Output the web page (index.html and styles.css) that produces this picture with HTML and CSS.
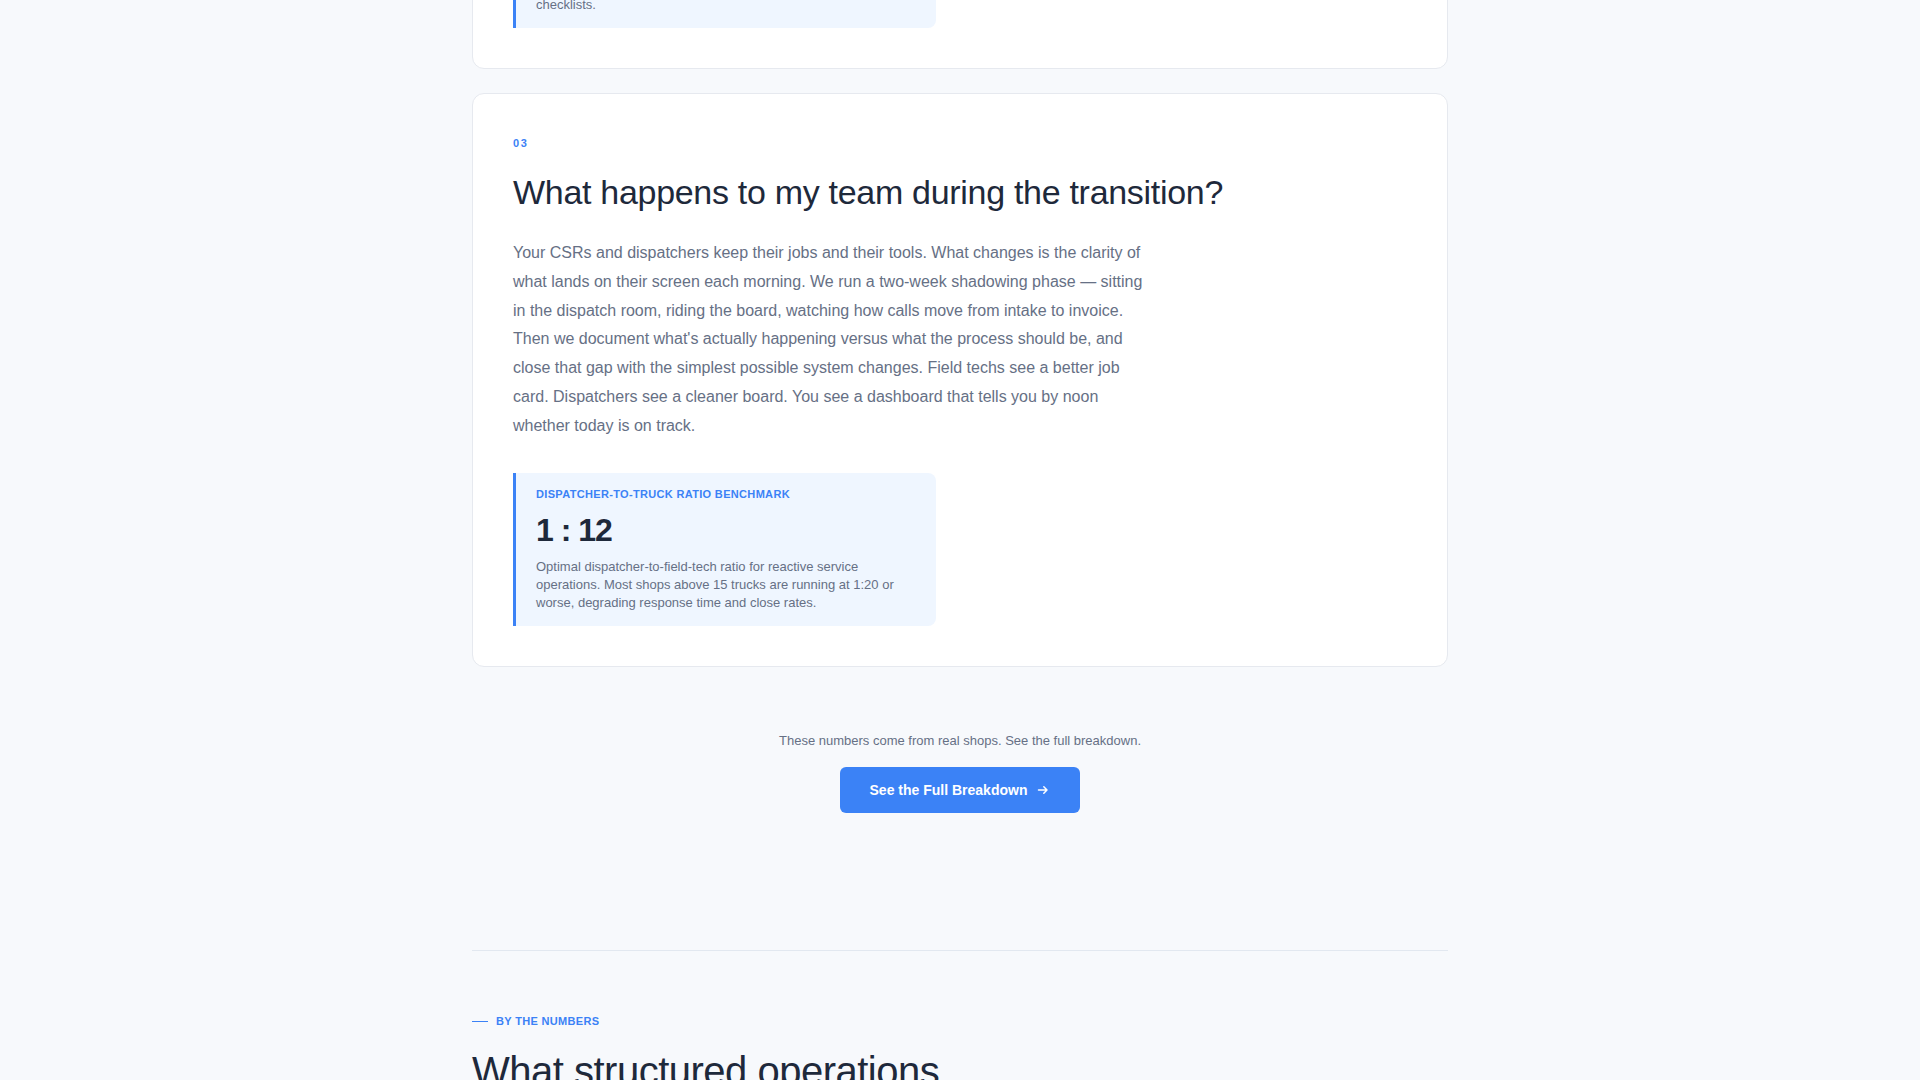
FILE: index.html
```html
<!DOCTYPE html>
<html lang="en">
<head>
<meta charset="utf-8">
<title>FAQ — Dispatch Operations</title>
<link rel="stylesheet" href="styles.css">
</head>
<body>
<main class="container">
  <section class="faq-list">
    <article class="faq-card">
      <div class="faq-num">02</div>
      <h2 class="faq-q">How fast will we see results?</h2>
      <p class="faq-a">Most shops see the first measurable change inside the first month. Callbacks drop, tickets close on the first visit more often, and the board stops carrying yesterday's leftovers into today. We track the numbers weekly so you can see the trend instead of guessing at it.</p>
      <div class="stat">
        <div class="stat-label">Average time to first result</div>
        <div class="stat-value">30 days</div>
        <p class="stat-desc">Median time to a measurable lift in first-time fix rate, driven by cleaner job cards, tighter intake scripts and standard dispatch checklists.</p>
      </div>
    </article>

    <article class="faq-card">
      <div class="faq-num">03</div>
      <h2 class="faq-q">What happens to my team during the transition?</h2>
      <p class="faq-a">Your CSRs and dispatchers keep their jobs and their tools. What changes is the clarity of what lands on their screen each morning. We run a two-week shadowing phase — sitting in the dispatch room, riding the board, watching how calls move from intake to invoice. Then we document what's actually happening versus what the process should be, and close that gap with the simplest possible system changes. Field techs see a better job card. Dispatchers see a cleaner board. You see a dashboard that tells you by noon whether today is on track.</p>
      <div class="stat">
        <div class="stat-label">Dispatcher-to-truck ratio benchmark</div>
        <div class="stat-value">1 : 12</div>
        <p class="stat-desc">Optimal dispatcher-to-field-tech ratio for reactive service operations. Most shops above 15 trucks are running at 1:20 or worse, degrading response time and close rates.</p>
      </div>
    </article>
  </section>

  <section class="cta">
    <p class="cta-note">These numbers come from real shops. See the full breakdown.</p>
    <a class="btn" href="#numbers">See the Full Breakdown
      <svg class="btn-arrow" width="12" height="12" viewBox="0 0 12 12" aria-hidden="true"><path d="M1.5 6h8.5M6.8 2.8 10 6 6.8 9.2" fill="none" stroke="currentColor" stroke-width="1.5" stroke-linecap="round" stroke-linejoin="round"/></svg>
    </a>
  </section>

  <section class="numbers" id="numbers">
    <div class="eyebrow"><span class="eyebrow-line"></span>By the numbers</div>
    <h2 class="numbers-title">What structured operations actually deliver</h2>
  </section>
</main>
</body>
</html>
```

FILE: styles.css
```css
* { box-sizing: border-box; }

html, body {
  margin: 0;
  background: #f7f9fc;
}

body {
  font-family: "Liberation Sans", Arial, Helvetica, sans-serif;
  color: #1e293b;
}

.container {
  width: 976px;
  margin: 0 auto;
}

/* FAQ cards; the list continues above the fold */
.faq-list {
  display: flex;
  flex-direction: column;
  gap: 24px;
  margin-top: -390px;
}

.faq-card {
  background: #ffffff;
  border: 1px solid #e6e9ef;
  border-radius: 12px;
  padding: 40px;
}

.faq-num {
  font-size: 11px;
  line-height: 18px;
  font-weight: 700;
  letter-spacing: 0.15em;
  color: #3b82f6;
}

.faq-q {
  margin: 20px 0 26px;
  font-size: 34px;
  line-height: 1.2;
  font-weight: 400;
  letter-spacing: -0.3px;
  color: #1e293b;
}

.faq-a {
  margin: 0 0 32px;
  max-width: 640px;
  font-size: 16px;
  line-height: 1.8;
  color: #667085;
}

/* Benchmark callout */
.stat {
  max-width: 423px;
  background: #eff6ff;
  border-left: 3px solid #3b82f6;
  border-radius: 0 8px 8px 0;
  padding: 15px 20px 14px;
}

.stat-label {
  margin-bottom: 11px;
  font-size: 11px;
  font-weight: 700;
  letter-spacing: 0.03em;
  text-transform: uppercase;
  color: #3b82f6;
}

.stat-value {
  margin-bottom: 9px;
  font-size: 32px;
  line-height: 1.2;
  font-weight: 700;
  letter-spacing: -1px;
  color: #1e293b;
}

.stat-desc {
  margin: 0;
  font-size: 13px;
  line-height: 1.4;
  color: #667085;
}

/* Call to action */
.cta {
  display: flex;
  flex-direction: column;
  align-items: center;
  padding: 64px 0 137px;
}

.cta-note {
  margin: 0 0 16px;
  font-size: 13px;
  line-height: 20px;
  color: #667085;
}

.btn {
  display: inline-flex;
  align-items: center;
  gap: 10px;
  padding: 14px 31px 14px 30px;
  background: #3b82f6;
  border-radius: 6px;
  color: #ffffff;
  font-size: 14px;
  line-height: 18px;
  font-weight: 700;
  text-decoration: none;
}

.btn-arrow { display: block; }

/* By the numbers */
.numbers {
  border-top: 1px solid #e2e8f0;
  padding-top: 62px;
}

.eyebrow {
  display: flex;
  align-items: center;
  gap: 8px;
  font-size: 11px;
  line-height: 16px;
  font-weight: 700;
  letter-spacing: 0.03em;
  text-transform: uppercase;
  color: #3b82f6;
}

.eyebrow-line {
  width: 16px;
  height: 1.5px;
  background: #3b82f6;
}

.numbers-title {
  margin: 18px 0 0;
  max-width: 600px;
  font-size: 40px;
  line-height: 1.2;
  font-weight: 400;
  letter-spacing: -0.5px;
  color: #1e293b;
}
```
